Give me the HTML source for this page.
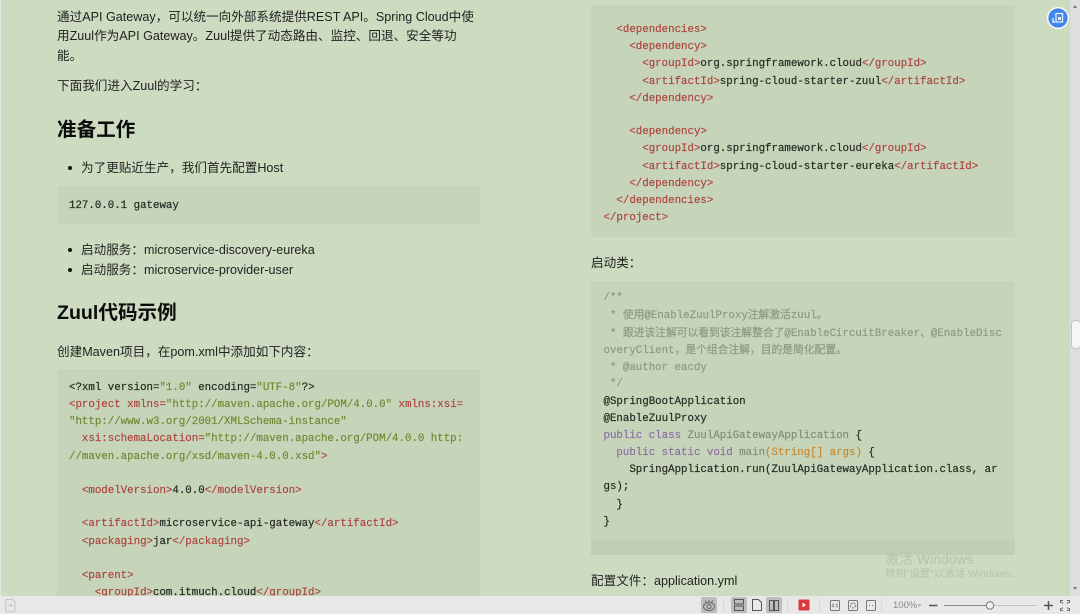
<!DOCTYPE html>
<html lang="zh">
<head>
<meta charset="utf-8">
<title>Zuul</title>
<style>
html,body{margin:0;padding:0;width:1080px;height:614px;overflow:hidden;background:#cddcc0}
#page{position:absolute;left:0;top:0;width:1080px;height:614px;overflow:hidden;background:#cddcc0}
#txt{position:absolute;left:0;top:0;width:1080px;height:614px;filter:blur(.35px)}
.b{position:absolute;background:#c6d5b9}
.l,.c,.h{position:absolute;white-space:pre;height:18px;line-height:18px;margin-top:1px}
.l{font:12.6px/18px "Liberation Sans","Noto Sans CJK SC",sans-serif;color:#222}
.h{font:bold 19.6px/26px "Liberation Sans","Noto Sans CJK SC",sans-serif;color:#0c0c0c;height:26px}
.c{font:10.78px/18px "Liberation Mono","Noto Sans CJK SC",monospace;color:#262a24;-webkit-text-stroke:.2px currentColor}
.t{color:#ad4440}.s{color:#6f8b35}.m{color:#8b9a82}.k{color:#8a6fa3}.n{color:#7f8e7b}.p{color:#c68a35}
.dot{position:absolute;width:4px;height:4px;border-radius:50%;background:#111;margin-top:1px}
#bar{position:absolute;left:0;top:596px;width:1080px;height:18px;background:#e8e8e8}
#sb{position:absolute;left:1070px;top:0;width:10px;height:596px;background:#dedede}
#th{position:absolute;left:1071px;top:320px;width:8px;height:27px;background:#f6f6f6;border:1px solid #c4c4c4;border-right:0;border-radius:4px}
.w{position:absolute;white-space:pre;font-family:"Liberation Sans","Noto Sans CJK SC",sans-serif;color:#b6c1ad}
</style>
</head>
<body>
<div id="page">
<div style="position:absolute;left:0;top:0;width:1px;height:596px;background:#e4e8e0"></div>
<div class="b" style="left:57px;top:186px;width:423px;height:38px"></div>
<div class="b" style="left:57px;top:369px;width:423px;height:227px"></div>
<div class="b" style="left:591px;top:5px;width:424px;height:232px"></div>
<div class="b" style="left:591px;top:281px;width:424px;height:274px"></div>
<div class="b" style="left:591px;top:540px;width:424px;height:15px;background:#c0cfb3"></div>

<div id="txt">
<div class="l" style="left:57px;top:7px">通过API Gateway，可以统一向外部系统提供REST API。Spring Cloud中使</div>
<div class="l" style="left:57px;top:26px">用Zuul作为API Gateway。Zuul提供了动态路由、监控、回退、安全等功</div>
<div class="l" style="left:57px;top:46px">能。</div>
<div class="l" style="left:57px;top:76px">下面我们进入Zuul的学习：</div>
<div class="h" style="left:57px;top:116px">准备工作</div>
<div class="dot" style="left:68px;top:165px"></div>
<div class="l" style="left:81px;top:158px">为了更贴近生产，我们首先配置Host</div>
<div class="c" style="left:69px;top:196px">127.0.0.1 gateway</div>
<div class="dot" style="left:68px;top:247px"></div>
<div class="l" style="left:81px;top:240px">启动服务：microservice-discovery-eureka</div>
<div class="dot" style="left:68px;top:267px"></div>
<div class="l" style="left:81px;top:260px">启动服务：microservice-provider-user</div>
<div class="h" style="left:57px;top:299px">Zuul代码示例</div>
<div class="l" style="left:57px;top:342px">创建Maven项目，在pom.xml中添加如下内容：</div>

<div class="c" style="left:69px;top:378px">&lt;?xml version=<span class="s">"1.0"</span> encoding=<span class="s">"UTF-8"</span>?&gt;</div>
<div class="c t" style="left:69px;top:395px">&lt;project xmlns=<span class="s">"http://maven.apache.org/POM/4.0.0"</span> xmlns:xsi=</div>
<div class="c s" style="left:69px;top:412px">"http://www.w3.org/2001/XMLSchema-instance"</div>
<div class="c t" style="left:69px;top:429px">  xsi:schemaLocation=<span class="s">"http://maven.apache.org/POM/4.0.0 http:</span></div>
<div class="c s" style="left:69px;top:447px">//maven.apache.org/xsd/maven-4.0.0.xsd"<span class="t">&gt;</span></div>
<div class="c t" style="left:69px;top:481px">  &lt;modelVersion&gt;<span style="color:#262a24">4.0.0</span>&lt;/modelVersion&gt;</div>
<div class="c t" style="left:69px;top:514px">  &lt;artifactId&gt;<span style="color:#262a24">microservice-api-gateway</span>&lt;/artifactId&gt;</div>
<div class="c t" style="left:69px;top:532px">  &lt;packaging&gt;<span style="color:#262a24">jar</span>&lt;/packaging&gt;</div>
<div class="c t" style="left:69px;top:566px">  &lt;parent&gt;</div>
<div class="c t" style="left:69px;top:583px">    &lt;groupId&gt;<span style="color:#262a24">com.itmuch.cloud</span>&lt;/groupId&gt;</div>

<div class="c t" style="left:603.5px;top:20px">  &lt;dependencies&gt;</div>
<div class="c t" style="left:603.5px;top:37px">    &lt;dependency&gt;</div>
<div class="c t" style="left:603.5px;top:54px">      &lt;groupId&gt;<span style="color:#262a24">org.springframework.cloud</span>&lt;/groupId&gt;</div>
<div class="c t" style="left:603.5px;top:72px">      &lt;artifactId&gt;<span style="color:#262a24">spring-cloud-starter-zuul</span>&lt;/artifactId&gt;</div>
<div class="c t" style="left:603.5px;top:89px">    &lt;/dependency&gt;</div>
<div class="c t" style="left:603.5px;top:122px">    &lt;dependency&gt;</div>
<div class="c t" style="left:603.5px;top:139px">      &lt;groupId&gt;<span style="color:#262a24">org.springframework.cloud</span>&lt;/groupId&gt;</div>
<div class="c t" style="left:603.5px;top:157px">      &lt;artifactId&gt;<span style="color:#262a24">spring-cloud-starter-eureka</span>&lt;/artifactId&gt;</div>
<div class="c t" style="left:603.5px;top:174px">    &lt;/dependency&gt;</div>
<div class="c t" style="left:603.5px;top:191px">  &lt;/dependencies&gt;</div>
<div class="c t" style="left:603.5px;top:208px">&lt;/project&gt;</div>

<div class="l" style="left:591px;top:253px">启动类：</div>

<div class="c m" style="left:603.5px;top:288px">/**</div>
<div class="c m" style="left:603.5px;top:306px"> * 使用@EnableZuulProxy注解激活zuul。</div>
<div class="c m" style="left:603.5px;top:324px"> * 跟进该注解可以看到该注解整合了@EnableCircuitBreaker、@EnableDisc</div>
<div class="c m" style="left:603.5px;top:341px">overyClient，是个组合注解，目的是简化配置。</div>
<div class="c m" style="left:603.5px;top:358px"> * @author eacdy</div>
<div class="c m" style="left:603.5px;top:374px"> */</div>
<div class="c" style="left:603.5px;top:392px">@SpringBootApplication</div>
<div class="c" style="left:603.5px;top:409px">@EnableZuulProxy</div>
<div class="c" style="left:603.5px;top:426px"><span class="k">public class</span> <span class="n">ZuulApiGatewayApplication</span> {</div>
<div class="c" style="left:603.5px;top:443px">  <span class="k">public static void</span> <span class="n">main</span><span class="p">(String[] args)</span> {</div>
<div class="c" style="left:603.5px;top:460px">    SpringApplication.run(ZuulApiGatewayApplication.class, ar</div>
<div class="c" style="left:603.5px;top:477px">gs);</div>
<div class="c" style="left:603.5px;top:495px">  }</div>
<div class="c" style="left:603.5px;top:512px">}</div>

<div class="l" style="left:591px;top:571px">配置文件：application.yml</div>

<div class="w" style="left:885px;top:550px;font-size:14px;line-height:18px">激活 Windows</div>
<div class="w" style="left:885px;top:567px;font-size:10.4px;line-height:16px">转到"设置"以激活 Windows。</div>
</div>

<div id="sb"></div>
<div id="th"></div>
<svg style="position:absolute;left:1070px;top:0" width="10" height="596">
<path d="M3 8 L5 5 L7 8Z" fill="#777"/>
<path d="M3 587 L5 590 L7 587Z" fill="#777"/>
</svg>

<svg style="position:absolute;left:1047px;top:7px" width="22" height="22" viewBox="0 0 22 22">
<circle cx="11" cy="11" r="10.3" fill="#3f86ee" stroke="#fff" stroke-width="1.3"/>
<path d="M9 6.500h6.500v8.500H9z" fill="none" stroke="#e6f0ff" stroke-width="1.300"/>
<path d="M11 10h3v3h-3z" fill="#e6f0ff"/>
<path d="M6 11v4h2" fill="none" stroke="#fff" stroke-width="1.200"/>
</svg>

<div id="bar"></div>
<svg style="position:absolute;left:0;top:596px;filter:blur(.3px)" width="1080" height="18" viewBox="0 0 1080 18" fill="none" stroke="#666" stroke-width="1">
<path d="M6.500 3.500h6l2.500 2.500v9a.8.8 0 0 1-.8.8H6.500a.8.8 0 0 1-.8-.8V4.300a.8.8 0 0 1 .8-.8z" stroke="#c2c2c2"/>
<path d="M8 9.500h4M10.500 8l1.500 1.500L10.500 11" stroke="#c2c2c2"/>
<rect x="701" y="1" width="16" height="16" rx="2" fill="#bdbdbd" stroke="none"/>
<ellipse cx="709" cy="10.500" rx="5.500" ry="4"/>
<circle cx="709" cy="10.500" r="2"/>
<path d="M705 4.500l1.500 2M713 4.500l-1.500 2M709 4v2"/>
<path d="M723.500 2v14M787.500 2v14M819.500 2v14M881.500 2v14" stroke="#d8d8d8"/>
<rect x="731" y="1" width="16" height="16" rx="2" fill="#bdbdbd" stroke="none"/>
<path d="M734.500 3.500h9v4.500h-9zM734.500 10h9v4.500h-9z" stroke="#555"/>
<path d="M752.500 3.500h6l3 3v8h-9z" stroke="#555"/>
<rect x="766" y="1" width="16" height="16" rx="2" fill="#bdbdbd" stroke="none"/>
<path d="M769.500 4.500h4v10h-4zM774.500 4.500h4v10h-4z" stroke="#555"/>
<rect x="798.500" y="3.500" width="11" height="11" rx="1" fill="#d8393d" stroke="none"/>
<path d="M802.500 6.500l3.500 2.500-3.500 2.500z" fill="#fff" stroke="none"/>
<rect x="830.500" y="4.500" width="9" height="10" rx="1" stroke="#777"/>
<path d="M833 7.500v4M837 7.500v4M835 8.500v.5M835 10.500v.5" stroke="#777"/>
<rect x="848.500" y="4.500" width="9" height="10" rx="1" stroke="#777"/>
<circle cx="853" cy="9.500" r="2.500" stroke="#777" stroke-dasharray="2 1"/>
<rect x="866.500" y="4.500" width="9" height="10" rx="1" stroke="#777"/>
<path d="M869 9.500h1M873 9.500h-1" stroke="#777"/>
<path d="M917.500 8.500l2 2 2-2z" fill="#999" stroke="none"/>
<path d="M929 9.500h8.500" stroke="#555" stroke-width="1.500"/>
<path d="M944 9.500h46" stroke="#888"/>
<path d="M990 9.500h47" stroke="#c4c4c4"/>
<circle cx="990" cy="9.500" r="3.700" fill="#f2f2f2" stroke="#777"/>
<path d="M1044 9.500h9M1048.500 5v9" stroke="#555" stroke-width="1.500"/>
<path d="M1060.500 7V4.500H1063M1067 4.500h2.500V7M1069.500 12v2.500H1067M1063 14.500h-2.500V12M1063 7.500l-1.500-1.500M1067 7.500l1.500-1.500M1067 11.500l1.500 1.500M1063 11.500l-1.500 1.500" stroke="#666"/>
</svg>
<div style="position:absolute;left:893px;top:600px;font:9.5px/12px 'Liberation Sans',sans-serif;color:#888;filter:blur(.2px)">100%</div>
</div>
</body>
</html>
